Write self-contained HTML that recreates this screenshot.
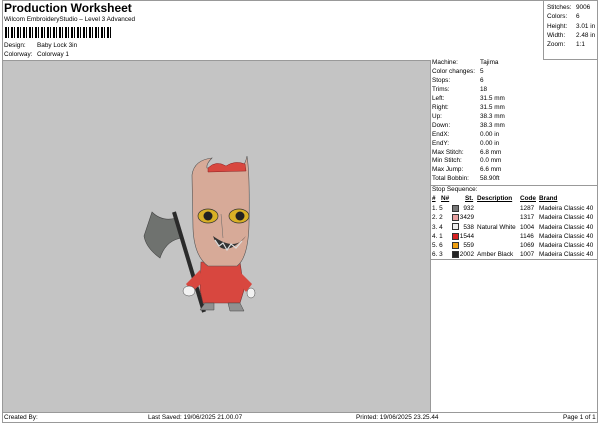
<!DOCTYPE html><html><head><style>
body{margin:0;width:600px;height:424px;background:#fff;font-family:"Liberation Sans",sans-serif;font-size:6.4px;color:#000;position:relative;overflow:hidden}
.a{position:absolute;white-space:nowrap}
.b{position:absolute;border:1px solid #999;box-sizing:border-box}
</style></head><body>
<div class="b" style="left:2px;top:0;width:596px;height:423px"></div>
<div class="a" style="left:4px;top:1px;font-size:12px;font-weight:bold">Production Worksheet</div>
<div class="a" style="left:4px;top:16px">Wilcom EmbroideryStudio – Level 3 Advanced</div>
<div class="a" style="left:5px;top:27px;width:106px;height:11px;background:repeating-linear-gradient(90deg,#000 0 2px,#fff 2px 3px,#000 3px 4px,#fff 4px 6px)"></div>
<div class="a" style="left:4px;top:42px">Design:</div><div class="a" style="left:37px;top:42px">Baby Lock 3in</div>
<div class="a" style="left:4px;top:51px">Colorway:</div><div class="a" style="left:37px;top:51px">Colorway 1</div>
<div class="a" style="left:3px;top:60px;width:427px;height:352px;background:#c4c4c4;border-top:1px solid #999;border-right:1px solid #999"></div>
<div class="b" style="left:543px;top:0;width:55px;height:60px"></div>
<div class="a" style="left:547px;top:3px;line-height:9.3px">Stitches:<br>Colors:<br>Height:<br>Width:<br>Zoom:</div>
<div class="a" style="left:576px;top:3px;line-height:9.3px">9006<br>6<br>3.01 in<br>2.48 in<br>1:1</div>
<div class="a" style="left:432px;top:59px;line-height:8.95px">Machine:<br>Color changes:<br>Stops:<br>Trims:<br>Left:<br>Right:<br>Up:<br>Down:<br>EndX:<br>EndY:<br>Max Stitch:<br>Min Stitch:<br>Max Jump:<br>Total Bobbin:</div>
<div class="a" style="left:480px;top:59px;line-height:8.95px">Tajima<br>5<br>6<br>18<br>31.5 mm<br>31.5 mm<br>38.3 mm<br>38.3 mm<br>0.00 in<br>0.00 in<br>6.8 mm<br>0.0 mm<br>6.6 mm<br>58.90ft</div>
<div class="a" style="left:430px;top:185px;width:168px;border-top:1px solid #999"></div>
<div class="a" style="left:430px;top:259px;width:168px;border-top:1px solid #999"></div>
<div class="a" style="left:432px;top:186px">Stop Sequence:</div>
<div class="a" style="left:432px;top:195px;font-weight:bold;text-decoration:underline">#</div>
<div class="a" style="left:441px;top:195px;font-weight:bold;text-decoration:underline">N#</div>
<div class="a" style="left:465px;top:195px;font-weight:bold;text-decoration:underline">St.</div>
<div class="a" style="left:477px;top:195px;font-weight:bold;text-decoration:underline">Description</div>
<div class="a" style="left:520px;top:195px;font-weight:bold;text-decoration:underline">Code</div>
<div class="a" style="left:539px;top:195px;font-weight:bold;text-decoration:underline">Brand</div>
<div class="a" style="left:432px;top:204px;line-height:9.3px">1. 5<br>2. 2<br>3. 4<br>4. 1<br>5. 6<br>6. 3</div>
<div class="a" style="left:452px;top:205px;width:5px;height:5px;background:#777;border:1px solid #333"></div>
<div class="a" style="left:452px;top:214px;width:5px;height:5px;background:#e8a0a0;border:1px solid #333"></div>
<div class="a" style="left:452px;top:223px;width:5px;height:5px;background:#eee;border:1px solid #333"></div>
<div class="a" style="left:452px;top:233px;width:5px;height:5px;background:#d82020;border:1px solid #333"></div>
<div class="a" style="left:452px;top:242px;width:5px;height:5px;background:#f0a010;border:1px solid #333"></div>
<div class="a" style="left:452px;top:251px;width:5px;height:5px;background:#222;border:1px solid #333"></div>
<div class="a" style="left:459px;top:204px;line-height:9.3px;text-align:right;width:15px">932<br>3429<br>538<br>1544<br>559<br>2002</div>
<div class="a" style="left:477px;top:204px;line-height:9.3px"><br><br>Natural White<br><br><br>Amber Black</div>
<div class="a" style="left:520px;top:204px;line-height:9.3px">1287<br>1317<br>1004<br>1146<br>1069<br>1007</div>
<div class="a" style="left:539px;top:204px;line-height:9.3px">Madeira Classic 40<br>Madeira Classic 40<br>Madeira Classic 40<br>Madeira Classic 40<br>Madeira Classic 40<br>Madeira Classic 40</div>
<div class="a" style="left:2px;top:412px;width:596px;border-top:1px solid #999"></div>
<div class="a" style="left:4px;top:414px">Created By:</div>
<div class="a" style="left:148px;top:414px">Last Saved: 19/06/2025 21.00.07</div>
<div class="a" style="left:356px;top:414px">Printed: 19/06/2025 23.25.44</div>
<div class="a" style="left:563px;top:414px">Page 1 of 1</div>
<svg class="a" style="left:0;top:0" width="600" height="424">
<path d="M152 212 Q162 222 176 218 L182 238 Q166 240 160 258 Q146 248 144 236 Q148 224 152 212 Z" fill="#6f726f" stroke="#444" stroke-width=".6"/>
<line x1="174" y1="212" x2="204" y2="312" stroke="#2a2a2a" stroke-width="4"/>
<path d="M201 262 L240 262 L244 290 L240 303 L203 303 L200 290 Z" fill="#d8473f" stroke="#733" stroke-width=".6"/>
<path d="M200 270 L186 284 L192 292 L203 282 Z" fill="#d8473f"/>
<path d="M240 272 L252 284 L246 292 L240 284 Z" fill="#d8473f"/>
<ellipse cx="189" cy="291" rx="6" ry="5" fill="#f2f2f2" stroke="#444" stroke-width=".5"/>
<ellipse cx="251" cy="293" rx="4" ry="5" fill="#f2f2f2" stroke="#444" stroke-width=".5"/>
<path d="M205 303 L214 303 L214 310 L200 310 Z M228 303 L240 303 L244 311 L230 311 Z" fill="#909090" stroke="#444" stroke-width=".5"/>
<path d="M192 175 Q194 160 212 158 Q206 164 207 168 L242 168 Q246 162 247 156 Q250 175 249 225 Q248 258 237 266 L208 266 Q194 256 193 228 Z" fill="#d7aa98" stroke="#555" stroke-width=".6"/>
<path d="M208 168 Q216 160 226 166 Q235 160 245 164 L246 171 L208 172 Z" fill="#d8473f" stroke="#822" stroke-width=".5"/>
<ellipse cx="208" cy="216" rx="10" ry="7" fill="#d9b025" stroke="#333" stroke-width=".7"/>
<circle cx="208" cy="216" r="4.5" fill="#222"/>
<ellipse cx="239" cy="216" rx="10" ry="7" fill="#d9b025" stroke="#333" stroke-width=".7"/>
<circle cx="240" cy="216" r="4.5" fill="#222"/>
<line x1="221" y1="214" x2="223" y2="238" stroke="#666" stroke-width=".5"/>
<path d="M213 236 Q222 262 246 236 Q235 252 213 236 Z" fill="#333"/>
<path d="M215 240 L219 246 L223 243 L227 250 L231 244 L236 248 L242 241" stroke="#ddd" fill="none" stroke-width="1.2"/>
</svg>
</body></html>
